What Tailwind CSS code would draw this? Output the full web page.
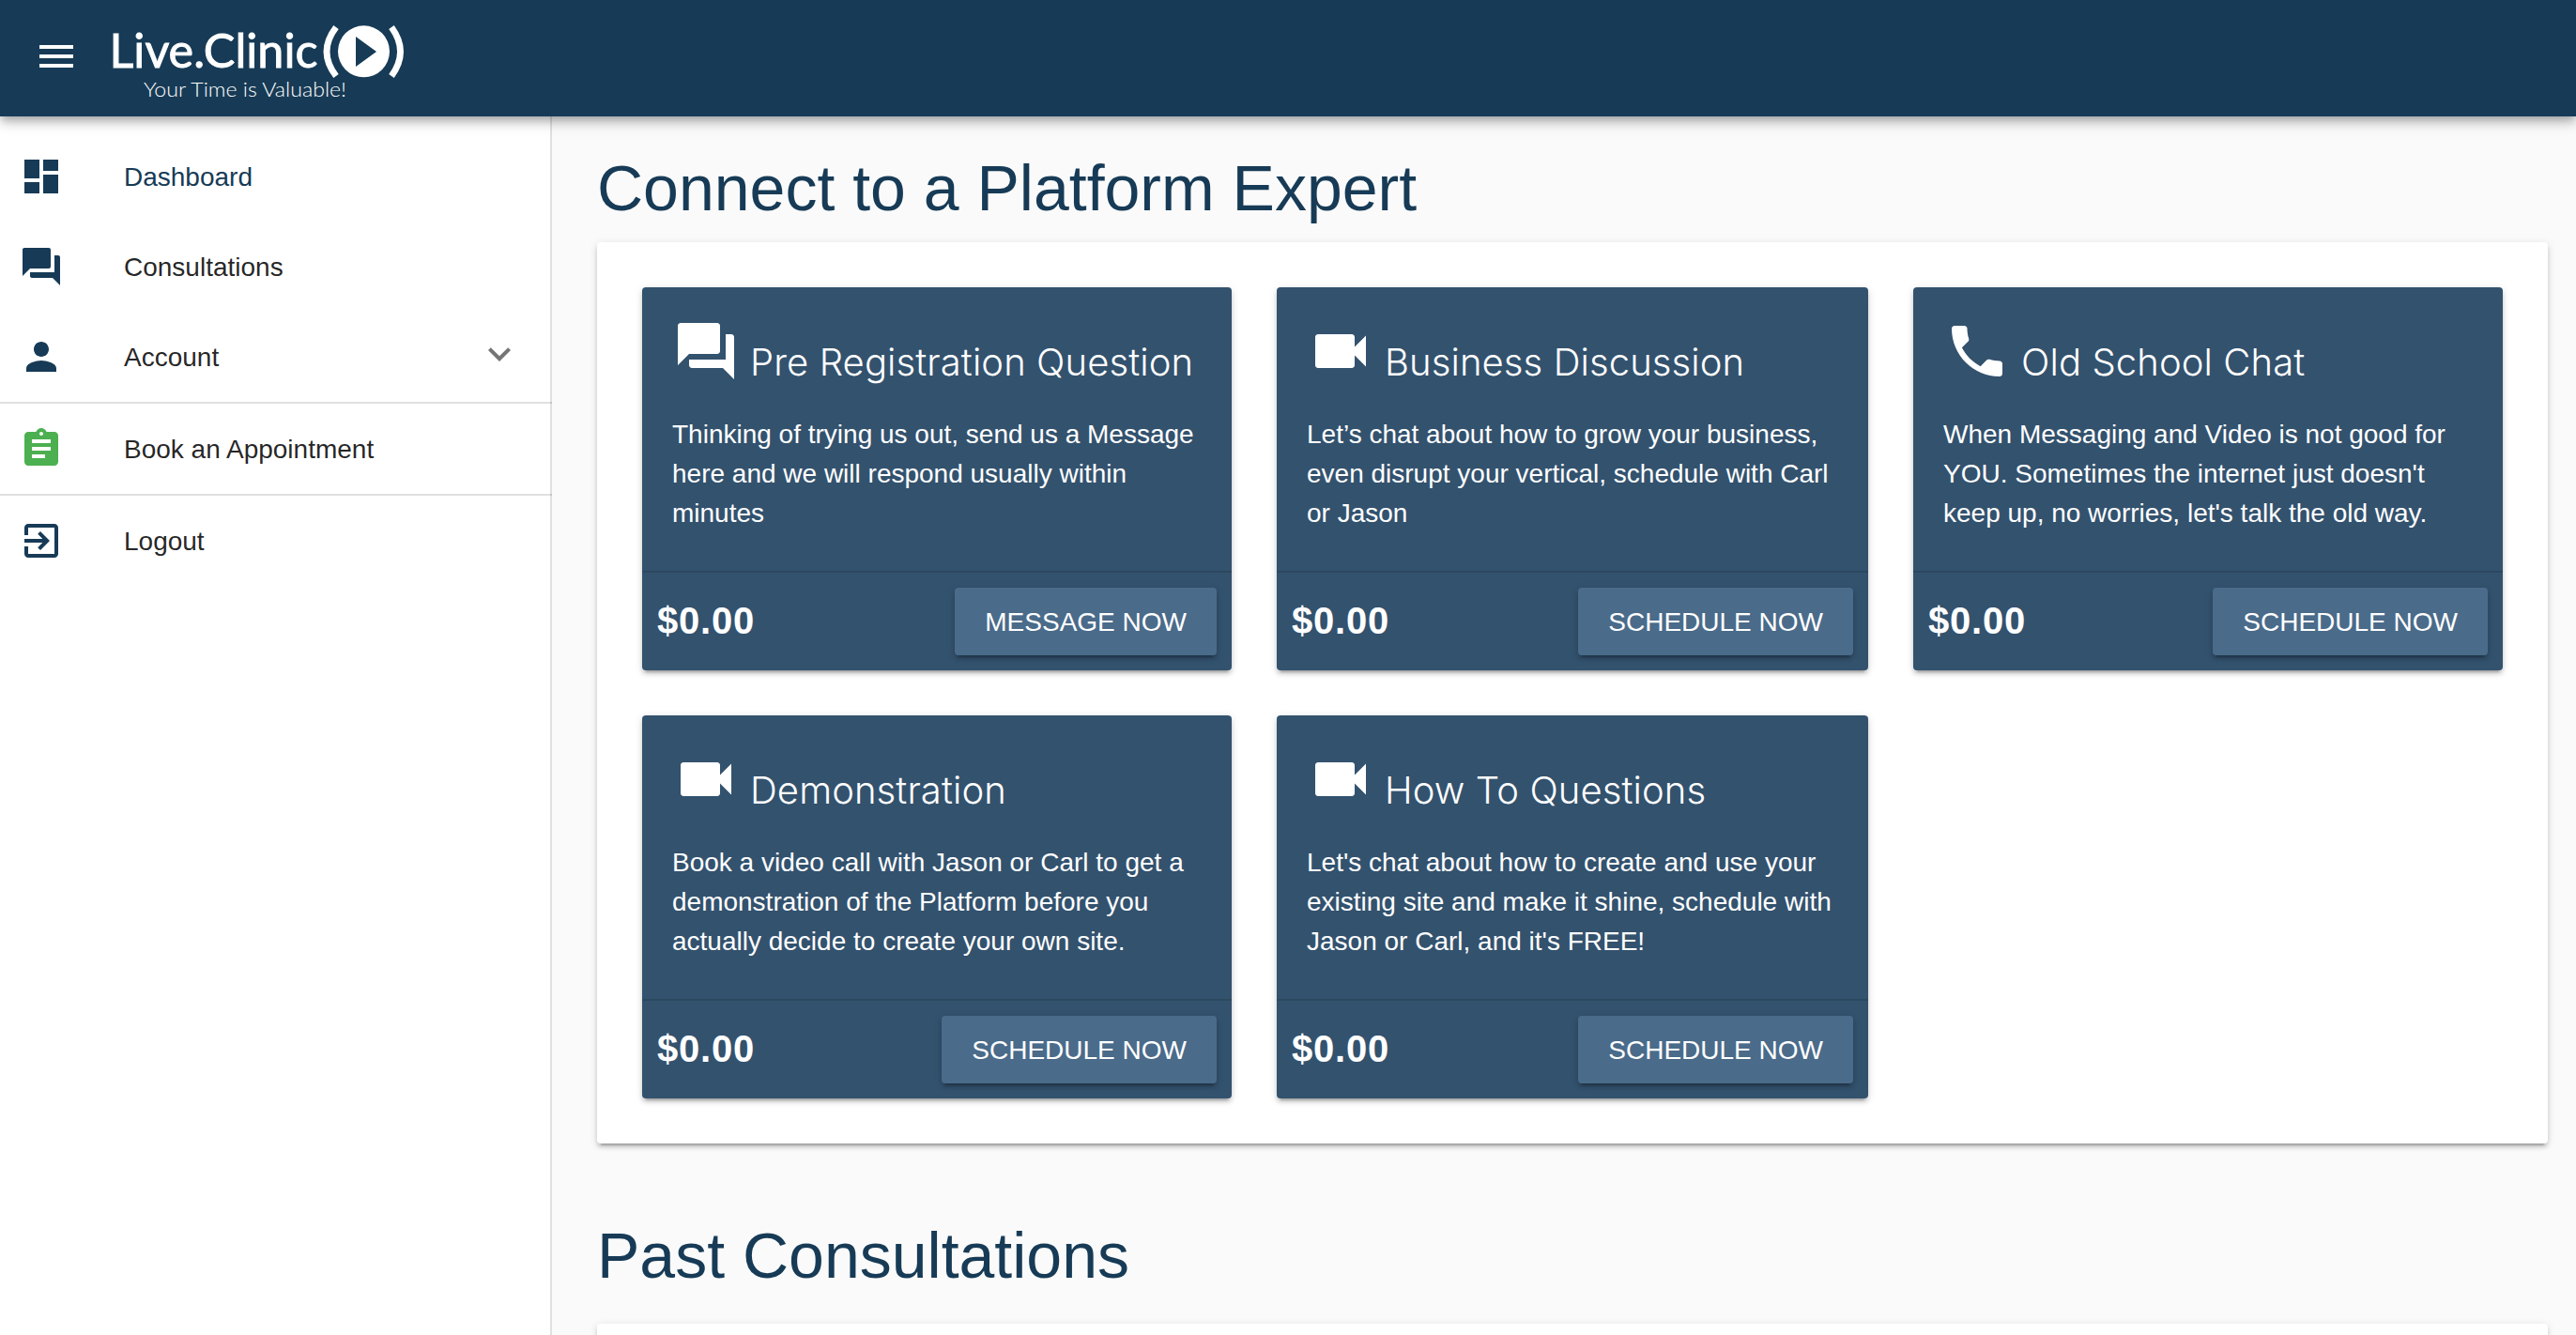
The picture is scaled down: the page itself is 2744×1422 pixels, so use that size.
<!DOCTYPE html>
<html lang="en">
  <head>
    <meta charset="utf-8" />
    <title>Live.Clinic - Dashboard</title>
    <script src="https://cdn.jsdelivr.net/npm/@tailwindcss/browser@4"></script>
    <style>
      body { font-family: "Liberation Sans", Arial, sans-serif; }
    </style>
  </head>
  <body class="h-[1422px] overflow-hidden bg-[#fafafa] text-[28px] text-black/87">
    <!-- icon sprites -->
    <svg class="hidden">
      <symbol id="forum" viewBox="0 0 24 24"><path d="M21 6h-2v9H6v2c0 .55.45 1 1 1h11l4 4V7c0-.55-.45-1-1-1zm-4 6V3c0-.55-.45-1-1-1H3c-.55 0-1 .45-1 1v14l4-4h10c.55 0 1-.45 1-1z"/></symbol>
      <symbol id="videocam" viewBox="0 0 24 24"><path d="M17 10.500V7c0-.55-.45-1-1-1H4c-.55 0-1 .45-1 1v10c0 .55.45 1 1 1h12c.55 0 1-.45 1-1v-3.500l4 4v-11l-4 4z"/></symbol>
      <symbol id="phone" viewBox="0 0 24 24"><path d="M6.620 10.790c1.440 2.830 3.760 5.140 6.590 6.590l2.200-2.200c.27-.27.67-.36 1.020-.24 1.120.37 2.330.57 3.570.57.55 0 1 .45 1 1V20c0 .55-.45 1-1 1-9.390 0-17-7.610-17-17 0-.55.45-1 1-1h3.500c.55 0 1 .45 1 1 0 1.250.2 2.450.57 3.570.11.35.03.74-.25 1.020l-2.200 2.200z"/></symbol>
    </svg>

    <header class="relative z-10 flex h-[124px] items-start bg-[#173b56] pl-9 text-white shadow-[0_4px_8px_-2px_rgba(0,0,0,0.2),0_8px_10px_0_rgba(0,0,0,0.14),0_2px_20px_0_rgba(0,0,0,0.12)]">
      <button class="mt-9">
        <svg class="size-12 fill-current" viewBox="0 0 24 24"><path d="M3 18h18v-2H3v2zm0-5h18v-2H3v2zm0-7v2h18V6H3z"/></svg>
      </button>
      <svg class="ml-7 h-[124px] w-[328px]" viewBox="112 0 328 124" fill="white" font-family="Lato, sans-serif">
        <text x="116.500" y="71.500" font-size="50" stroke="white" stroke-width="0.900" textLength="222" lengthAdjust="spacingAndGlyphs">Live.Clinic</text>
        <text x="153" y="103" font-size="21.500" font-weight="300" textLength="216" lengthAdjust="spacingAndGlyphs">Your Time is Valuable!</text>
        <path fill-rule="evenodd" d="M387.500 27.300a27.500 27.500 0 1 0 0 55a27.500 27.500 0 1 0 0-55zM379 39l22 16L379 71z"/>
        <path d="M358 29Q338 55 358 81M417 29Q436 55 417 81" fill="none" stroke="white" stroke-width="6.800"/>
      </svg>
    </header>

    <div class="flex h-[1298px]">
      <aside class="w-[588px] shrink-0 border-r-2 border-black/12 bg-white pt-4">
        <a class="flex h-24 items-center pl-5 text-[#173b56]">
          <svg class="size-12 fill-[#173b56]" viewBox="0 0 24 24"><path d="M3 13h8V3H3v10zm0 8h8v-6H3v6zm10 0h8V11h-8v10zm0-18v6h8V3h-8z"/></svg>
          <span class="ml-16 pt-0.5">Dashboard</span>
        </a>
        <a class="flex h-24 items-center pl-5">
          <svg class="size-12 fill-[#173b56]"><use href="#forum"/></svg>
          <span class="ml-16 pt-0.5">Consultations</span>
        </a>
        <a class="flex h-24 items-center pl-5">
          <svg class="size-12 fill-[#173b56]" viewBox="0 0 24 24"><path d="M12 12c2.210 0 4-1.790 4-4s-1.790-4-4-4-4 1.790-4 4 1.790 4 4 4zm0 2c-2.670 0-8 1.340-8 4v2h16v-2c0-2.660-5.330-4-8-4z"/></svg>
          <span class="ml-16 flex-1 pt-0.5">Account</span>
          <svg class="mr-[30px] mb-1.5 size-12 fill-[#757575]" viewBox="0 0 24 24"><path d="M7.410 8.590L12 13.170l4.590-4.580L18 10l-6 6-6-6z"/></svg>
        </a>
        <a class="-mr-0.5 flex h-[98px] items-center border-t-2 border-black/12 pl-5">
          <svg class="size-12 fill-[#4caf50]" viewBox="0 0 24 24"><path d="M19 3h-4.180C14.400 1.840 13.300 1 12 1c-1.300 0-2.400.84-2.820 2H5c-1.100 0-2 .9-2 2v14c0 1.100.9 2 2 2h14c1.100 0 2-.9 2-2V5c0-1.100-.9-2-2-2zm-7 0c.55 0 1 .45 1 1s-.45 1-1 1-1-.45-1-1 .45-1 1-1zm2 14H7v-2h7v2zm3-4H7v-2h10v2zm0-4H7V7h10v2z"/></svg>
          <span class="ml-16 pt-0.5">Book an Appointment</span>
        </a>
        <a class="-mr-0.5 flex h-[98px] items-center border-t-2 border-black/12 pl-5">
          <svg class="size-12 fill-[#173b56]" viewBox="0 0 24 24"><path d="M10.090 15.590L11.500 17l5-5-5-5-1.410 1.410L12.670 11H3v2h9.670l-2.580 2.590zM19 3H5c-1.110 0-2 .9-2 2v4h2V5h14v14H5v-4H3v4c0 1.100.89 2 2 2h14c1.100 0 2-.9 2-2V5c0-1.100-.9-2-2-2z"/></svg>
          <span class="ml-16 pt-0.5">Logout</span>
        </a>
      </aside>

      <main class="flex flex-1 flex-col pr-[30px] pl-12">
        <h1 class="h-[134px] shrink-0 pt-9 text-[68px] leading-[80px] text-[#173b56]">Connect to a Platform Expert</h1>

        <section id="experts" class="grid h-[960px] shrink-0 grid-cols-[628px_630px_628px] grid-rows-2 gap-12 rounded bg-white p-12 shadow-[0_6px_2px_-4px_rgba(0,0,0,0.2),0_4px_4px_0_rgba(0,0,0,0.14),0_2px_10px_0_rgba(0,0,0,0.12)]"></section>

        <h1 class="h-48 shrink-0 pt-[79px] text-[68px] leading-[80px] text-[#173b56]">Past Consultations</h1>
        <section class="flex-1 rounded-t bg-white shadow-[0_6px_2px_-4px_rgba(0,0,0,0.2),0_4px_4px_0_rgba(0,0,0,0.14),0_2px_10px_0_rgba(0,0,0,0.12)]"></section>
      </main>
    </div>

    <script>
      const services = [
        { icon: 'forum', title: 'Pre Registration Question', lines: ['Thinking of trying us out, send us a Message', 'here and we will respond usually within', 'minutes'], action: 'MESSAGE NOW' },
        { icon: 'videocam', title: 'Business Discussion', lines: ['Let’s chat about how to grow your business,', 'even disrupt your vertical, schedule with Carl', 'or Jason'], action: 'SCHEDULE NOW' },
        { icon: 'phone', title: 'Old School Chat', lines: ['When Messaging and Video is not good for', "YOU. Sometimes the internet just doesn't", "keep up, no worries, let's talk the old way."], action: 'SCHEDULE NOW' },
        { icon: 'videocam', title: 'Demonstration', lines: ['Book a video call with Jason or Carl to get a', 'demonstration of the Platform before you', 'actually decide to create your own site.'], action: 'SCHEDULE NOW' },
        { icon: 'videocam', title: 'How To Questions', lines: ["Let's chat about how to create and use your", 'existing site and make it shine, schedule with', "Jason or Carl, and it's FREE!"], action: 'SCHEDULE NOW' },
      ];

      document.getElementById('experts').innerHTML = services.map((s) => `
        <div class="flex flex-col rounded bg-[#33526e] text-white shadow-[0_6px_2px_-4px_rgba(0,0,0,0.2),0_4px_4px_0_rgba(0,0,0,0.14),0_2px_10px_0_rgba(0,0,0,0.12)]">
          <div class="flex-1 px-8 pt-8">
            <div class="flex">
              <svg class="size-[72px] fill-current"><use href="#${s.icon}"/></svg>
              <h3 class="ml-[11px] pt-6 font-[Inter] text-[40px] leading-[48px] font-light tracking-[0.1px] whitespace-nowrap">${s.title}</h3>
            </div>
            <p class="mt-8 leading-[42px] whitespace-nowrap">${s.lines.join('<br>')}</p>
          </div>
          <div class="flex h-[106px] items-center justify-between border-t-2 border-black/12 px-4">
            <span class="pb-[3px] text-[40px] font-bold tracking-[0.02em]">$0.00</span>
            <button class="h-[72px] rounded bg-[#4a6b8a] px-8 pt-0.5 shadow-[0_6px_2px_-4px_rgba(0,0,0,0.2),0_4px_4px_0_rgba(0,0,0,0.14),0_2px_10px_0_rgba(0,0,0,0.12)]">${s.action}</button>
          </div>
        </div>
      `).join('');
    </script>
  </body>
</html>
